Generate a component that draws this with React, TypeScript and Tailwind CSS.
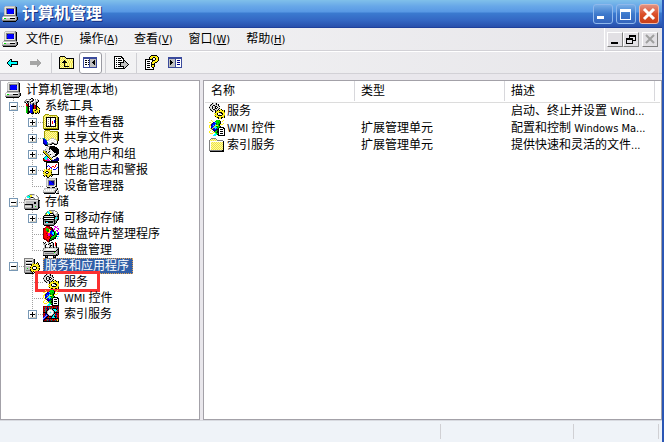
import clsx from "clsx";

const palette: Record<string, string> = {
  k: "#000000",
  w: "#ffffff",
  l: "#e4e4e0",
  g: "#c0c0c0",
  d: "#808080",
  D: "#404040",
  b: "#0000ff",
  n: "#000084",
  y: "#ffef18",
  Y: "#efde4a",
  s: "#ffff9c",
  o: "#9c9a00",
  r: "#ff0000",
  R: "#840000",
  c: "#00ffff",
  t: "#008284",
  G: "#00e000",
  e: "#008200",
  m: "#e000e0",
  N: "#3a4a9c",
  L: "#a5b6e8",
};

const icons: Record<string, string[]> = {
  computer: [
    "...ggggggggggd..",
    "..glllllllllgdk.",
    "..glddddddddgdk.",
    "..gldnbbbbbnldk.",
    "..gldbbbbbbbldk.",
    "..gldbbbbbbbldk.",
    "..gldbbbbbbbldk.",
    "..gldnbbbbbnldk.",
    "..glllllllllldk.",
    "..ddddddddddddk.",
    ".gggggggggggggd.",
    "gwwwwwwwwwwwwgdk",
    "gwGGggggkkkkkgdk",
    "ggggggggggggggdk",
    "ddddddddddddddk.",
    ".kkkkkkkkkkkkk..",
  ],
  tools: [
    ".......kk.......",
    "..dggdkwdk.d.d..",
    ".dgwwgwgDk.g.gk.",
    "dgdkkgdkk..gggk.",
    "dk.kdgk..gggkk..",
    "..kgk.dgdkgdk...",
    "..rRk.bgnkdgk...",
    "..rRk.bbnkrRk...",
    "..GRkkbbnkrRkk..",
    "..GekwbbnkrRkyk.",
    "..GekgbbnkrRkyyk",
    "..GekwbbnyyykoyY",
    "..GekgbbnyokyYyk",
    "..GekkbbnoyYyoyk",
    "..GekkbbnkyoykYk",
    "...kk..kkk.kk.k.",
  ],
  events: [
    "..oooo..........",
    ".oYsYsoooooooo..",
    "oYsYsYsYsYsYsYo.",
    "osYkkkkkkkkkkYok",
    "oYskwwwkwwwwksok",
    "osYkwdwkwwwwkYok",
    "oYskwwwkwwwbksok",
    "osYkwdwkwrwbkYok",
    "oYskwwwkwrwbksok",
    "osYkwdwkwrwwkYok",
    "oYskwwwkwwwwksok",
    "osYkwdwkwwwwkYok",
    "oYskkkkkkkkkksok",
    "osYsYsYsYsYsYsok",
    "oooooooooooooook",
    ".kkkkkkkkkkkkkkk",
  ],
  shared: [
    "..ooooo.........",
    ".oYsYsYoooooooo.",
    ".osYsYsYsYsYsYok",
    ".oYsYsYsYsYsYsok",
    ".osYsYsYsYsYsYok",
    ".oYsYsYsYsYsYsok",
    ".osYsYsYsYsYsYok",
    ".oYsYsYsYsYsYsok",
    "ttsYsYsYgggsYsok",
    "nbtYsYgwwwwggYok",
    "nbbtggwwlwlwwgok",
    "nbbbwwlwwwwlwwk.",
    "nbbbtwwwgdgwwwk.",
    "nnbbtgggdkkdggk.",
    ".nnntddkk..kkk..",
    "..kkk...........",
  ],
  users: [
    "....gddkkkkk....",
    "...glwDkkkkkkk..",
    "...lllkkkkkkkkk.",
    "..dlllklkkkkkkkk",
    "dgglllllwkkkkkkk",
    "oydkwlklwwkkkkkk",
    "kyodlklwwlwkkkkk",
    ".kyodwlwwlllwkkk",
    "..kyodlkllwlkkk.",
    "...kyodwwwllkk..",
    "..tckyowllkkd...",
    ".tccckyolkwwwdn.",
    "kcccmwkyowwwgnnn",
    "Rrccmmwkygwnnnnn",
    "RRrrmmmwknnnnnnk",
    ".kkkkkkkkkkkkkk.",
  ],
  perf: [
    "...kkkkkkkkkkkkk",
    "...kwwwwwwwwwwwk",
    "...kwwwwwwwwwrwk",
    "...kwbwwwwwwrwwk",
    "...kbwbwwrrwrwwk",
    "...kwwwbrwwrwwbk",
    "...kwwrwbwwwwbwk",
    ".y.oyrowywbbbwwk",
    ".yyYyYyyowwwwwwk",
    "kyykkyyYowwwwwwk",
    "yYk..kyykwwwwwwk",
    "oyykkyyYowwwwwwk",
    ".yYyyYyykkkkkkkk",
    "kyokyYokyk......",
    ".k.koyk.k.......",
    "....kk..........",
  ],
  device: [
    "...ggggggggggk..",
    "...gllllllllgk..",
    "...gldddddddlk..",
    "...gldbbnnndlk..",
    "...gldbbbnndlk..",
    "...gldbbbbndlk..",
    "...gldbbbbbdlk..",
    "...glddddddllk..",
    "...dllllllllkk..",
    "....kkkggkkk.g..",
    ".gggggggggggggk.",
    ".glwlwlwlwlwgdk.",
    "gwlwlwlwlwlgdk.g",
    "gllllllllllgk.gd",
    "ddddddddddddk.gdk",
    ".kkkkkkkkkkk.kkk",
  ],
  storage: [
    ".....gddddg.....",
    "...gdcyylllwd...",
    "..gccGyywwwwld..",
    ".gwcccdkkdwwwld.",
    ".gwwwdgwwgdwwld.",
    "ddddddddddddddd.",
    "dlllllllllllllkk",
    "glggggggggggggkd",
    "glggggggggkkggkd",
    "glggggggggkkggkd",
    "dkkkkkkkkgggggkd",
    "dggggggdkgggggkd",
    "dllllllgkggGggkd",
    "dggggggdkgggggkk",
    "ddddddddddddddk.",
    ".kkkkkkkkkkkkk..",
  ],
  removable: [
    "......dddddd....",
    "....dcyygggwdd..",
    "...dcccyydgwwwd.",
    "..dGwcckkkdwwgd.",
    "..dyywkwwwkgggdk",
    ".kkkkkkkkkkkggdk",
    "kgllllllllgkkdkk",
    "kkkkkkkkkkkkdcdk",
    "kwwwwwwwwwwkccdk",
    "kkkkkkkkkkkkgdkk",
    "kddgggggggdkddk.",
    "kdkkkkkkkkdkdk..",
    "kgkcckkkkkgkdk..",
    "kgggggggggdkk...",
    "kddddddddddk....",
    ".kkkkkkkkkk.....",
  ],
  defrag: [
    "...rRRR....mm.m.",
    "..rrrrRRk...mm..",
    "RRrGGrRrRk.m..mm",
    "RrrGGGyRRkmm...m",
    "RrrGeeyybkk..mm.",
    "RrrreeybbbkGG.m.",
    "RrrrryybbcckG..b",
    "RrrRrmmbbcckGGbb",
    "RrrrrmmRbbckGekb",
    "RrrrRmmRrbkGee..",
    "RrrrrrRrkGGGekcc",
    "RrrrRrrkGGeek...",
    "RRrrrrrkeeekk.c.",
    ".RRRrrkGekk.....",
    "...RRrkkk.......",
    "....RRk.........",
  ],
  disk: [
    "k.k..dg.kk..r...",
    "gkg..gkkwgk.rk..",
    "gggk.kggwgk.rk..",
    ".gk...gkkgk.rk..",
    ".gk...gk.gk.gk..",
    ".gkddgkddgkdgkdd",
    "dggllllllllllggk",
    "dllwwwwwwwwlllkk",
    "gllllllllllllkdk",
    "dkkkkkkkkkkkkgdk",
    "dggggggggggGggdk",
    "dgdddddddddgggdk",
    "dggggggggggggkdk",
    "kkkkkkkkkkkkkkk.",
    "..kdk.....kdk...",
    "..kkk.....kkk...",
  ],
  serverGear: [
    "ddddddddd.......",
    "dlllllllldk.....",
    "dggggggggdk.....",
    "dgkkkkkkgdk.....",
    "dgwwwwwwgdk..k..",
    "dggggggggyk.kyk.",
    "dgkkkkkkyoyyyYk.",
    "dgwwwwwkyYyyyyyk",
    "dgggggyyykkkyYok",
    "dgggggkyk...kyyy",
    "dggGggyyk...kYok",
    "dgggggkyykkkyyyk",
    "dgddddkyyyyyYyk.",
    "dgggggdkykyykyk.",
    "ddddddddk.kyk.k.",
    ".kkkkkkkkk.k....",
  ],
  gears: [
    "...kg.gk........",
    ".gkgllgkgk......",
    ".kglkklglk......",
    "gglk.gkklgk.....",
    "kllkggk.kll.....",
    "gglk.gkklgk.....",
    ".kglkklglk.yk...",
    ".gkglgkgkykyykyk",
    "...kg.koyyyYyyyk",
    "......kyYykkkyyo",
    ".....yyyk..gkkyy",
    "......oyk.g..kyy",
    ".....yyyYkkkkyYo",
    "......kyyyYyyyyk",
    ".......ykkyykkyk",
    ".........kyyk...",
  ],
  wmi: [
    "..y....GGGe...y.",
    "...y..eGGGGk.y..",
    "yy..nbcGGeGk....",
    "..ynbbbeGGek..y.",
    ".ynbbbceGekyyy..",
    "yynbcbyyyGk.....",
    "y.bbbyceeGGk....",
    "y.nbyccceGkkkkk.",
    ".ynybbcbGkwwwwkk",
    "..ynnbbnkkwkkkwk",
    ".y..nnneekwwwwwk",
    "y..y.nGGkkwkkkwk",
    "y...yyGekkwwwwwk",
    ".yyy..cGGkwkkkwk",
    ".....ccckkwwwwwk",
    "....ccc..kkkkkkk",
  ],
  index: [
    "RRRRRRRRRRRRRRRR",
    "RrtrnrtrerRrtrnR",
    "RRtRnRtRtRkkkRnR",
    "RrtrnkgggkcccktR",
    "RRtRkgwwwgkcccRR",
    "RrtkgwwlwwgkcrtR",
    "kkkkgwlclwgkkkkk",
    "RrnkgwwlwwgkrnrR",
    "RRnbkgwwwgkcRnRR",
    "RrbLbkgggkctrtrR",
    "RbLbkRkkktckknrR",
    "bLbkRrtrncccktRR",
    "Lbkkkkkkkkkkkkkk",
    "bkRrtrnrerRrRryk",
    "kRRRtRnRtRRRtRyk",
    "kkkkkkkkkkkkkkkk",
  ],
  folder: [
    "................",
    "..ddddd.........",
    ".dsYsYsd........",
    "dsYsYsYsdddddd..",
    "dwwwwwwwwwwwwwk.",
    "dwsYsYsYsYsYsYk.",
    "dwYsYsYsYsYsYsk.",
    "dwsYsYsYsYsYsYk.",
    "dwYsYsYsYsYsYsk.",
    "dwsYsYsYsYsYsYk.",
    "dwYsYsYsYsYsYsk.",
    "dwsYsYsYsYsYsYk.",
    "dwYsYsYsYsYsYsk.",
    "dddddddddddddkk.",
    ".kkkkkkkkkkkkkk.",
    "................",
  ],
  back: [
    "................",
    "................",
    "................",
    "................",
    ".....kk.........",
    "....kck.........",
    "...kcckkkkkkk...",
    "..kccccccccck...",
    "..kccccccccck...",
    "...kcckkkkkkk...",
    "....kck.........",
    ".....kk.........",
    "................",
    "................",
    "................",
    "................",
  ],
  forward: [
    "................",
    "................",
    "................",
    "................",
    ".........z......",
    ".........zz.....",
    "..zzzzzzzzzz....",
    "..zzzzzzzzzzz...",
    "..zzzzzzzzzzz...",
    "..zzzzzzzzzz....",
    ".........zz.....",
    ".........z......",
    "................",
    "................",
    "................",
    "................",
  ],
  up: [
    "................",
    ".kkkkk..........",
    "kYsYsYk.........",
    "kYsYsYskkkkkkkk.",
    "ksYsYsYsYsYsYsk.",
    "kYsYskYsYsYsYsk.",
    "ksYskkkYsYsYsYk.",
    "kYskkkkksYsYsYk.",
    "ksYsYkYsYsYsYsk.",
    "kYsYskYsYsYsYsk.",
    "ksYsYkYsYsYsYsk.",
    "kYsYskkkkkYsYsk.",
    "ksYsYsYsYsYsYsk.",
    "kkkkkkkkkkkkkkk.",
    "................",
    "................",
  ],
  paneLeft: [
    "................",
    "................",
    ".NNNNNNNNNNNNNN.",
    ".NNNNNNNNNNNNNN.",
    ".NwwwwwNggggggN.",
    ".NwkkwkNggggkgN.",
    ".NwwwwwNgggkkgN.",
    ".NwkkwkNggkkkgN.",
    ".NwwwwwNgggkkgN.",
    ".NwkkwkNggggkgN.",
    ".NwwwwwNggggggN.",
    ".NwwwwwNggggggN.",
    ".NNNNNNNNNNNNNN.",
    "................",
    "................",
    "................",
  ],
  paneRight: [
    "................",
    "................",
    ".NNNNNNNNNNNNNN.",
    ".NNNNNNNNNNNNNN.",
    ".NggggggNwwwwwN.",
    ".NgkggggNwnnnwN.",
    ".NgkkgggNwwwwwN.",
    ".NgkkkggNwnnnwN.",
    ".NgkkgggNwwwwwN.",
    ".NgkggggNwnnnwN.",
    ".NggggggNwwwwwN.",
    ".NggggggNwwwwwN.",
    ".NNNNNNNNNNNNNN.",
    "................",
    "................",
    "................",
  ],
  exportList: [
    "................",
    ".kkkkkkkk.......",
    ".kwwwwwwkk......",
    ".kwkwkkkwkk.....",
    ".kwwwwwwwwk.....",
    ".kwkwkkkkwkk....",
    ".kwwwwwwwwkgk...",
    ".kwkwkkkkkkggk..",
    ".kwwwwwkggggggk.",
    ".kwkwkkkgggggggk",
    ".kwwwwwkggggggk.",
    ".kwkwkkkkkkggk..",
    ".kwwwwwwwwkgk...",
    ".kkkkkkkkkkk....",
    "................",
    "................",
  ],
  help: [
    ".......kkkkkk...",
    "......kyyyyyyk..",
    ".....kyyykkyyyk.",
    ".....kyyk..kyyk.",
    ".kkkkkkkk..kyyk.",
    ".kwwwwwwkkkyyyk.",
    ".kwkkkwwkyyyyk..",
    ".kwwwwwkyyykk...",
    ".kwkkkwkyyk.....",
    ".kwwwwwkkkk.....",
    ".kwkkkwkyyk.....",
    ".kwwwwwkyyk.....",
    ".kwkkkwwkk......",
    ".kwwwwwwwk......",
    ".kkkkkkkkk......",
    "................",
  ],
};

// Draws a 16x16 bitmap, merging equal neighbours of a line into one rect.
const Icon = ({ name, className }: { name: string; className?: string }) => (
  <svg
    viewBox="0 0 16 16"
    shapeRendering="crispEdges"
    aria-hidden="true"
    className={clsx("h-4 w-4 shrink-0", className)}
  >
    {icons[name].map((line, y) =>
      Array.from(line.matchAll(/([^.])\1*/g)).map((run) => (
        <rect
          key={`${y}-${run.index}`}
          x={run.index}
          y={y}
          width={run[0].length}
          height={1}
          fill={palette[run[1]] ?? "#a5a5a5"}
        />
      )),
    )}
  </svg>
);

// Latin runs are set one size smaller than the Chinese text around them.
const Mixed = ({ text }: { text: string }) => (
  <span>
    {text.split(/([\x20-\x7e]+)/).map((part, index) =>
      index % 2 ? (
        <span key={index} className="text-[11px]">
          {part}
        </span>
      ) : (
        part
      ),
    )}
  </span>
);

type Node = {
  label: string;
  icon: string;
  cells: string[];
  selected?: boolean;
  marked?: boolean;
};

// Guide cells: "line" passes by, "tee" and "end" join the item,
// "plus" and "minus" are joints with an expander.
const nodes: Node[] = [
  { label: "计算机管理(本地)", icon: "computer", cells: [] },
  { label: "系统工具", icon: "tools", cells: ["minus"] },
  { label: "事件查看器", icon: "events", cells: ["line", "plus"] },
  { label: "共享文件夹", icon: "shared", cells: ["line", "plus"] },
  { label: "本地用户和组", icon: "users", cells: ["line", "plus"] },
  { label: "性能日志和警报", icon: "perf", cells: ["line", "plus"] },
  { label: "设备管理器", icon: "device", cells: ["line", "end"] },
  { label: "存储", icon: "storage", cells: ["minus"] },
  { label: "可移动存储", icon: "removable", cells: ["line", "plus"] },
  { label: "磁盘碎片整理程序", icon: "defrag", cells: ["line", "tee"] },
  { label: "磁盘管理", icon: "disk", cells: ["line", "end"] },
  { label: "服务和应用程序", icon: "serverGear", cells: ["minus-end"], selected: true },
  { label: "服务", icon: "gears", cells: ["blank", "tee"], marked: true },
  { label: "WMI 控件", icon: "wmi", cells: ["blank", "tee"] },
  { label: "索引服务", icon: "index", cells: ["blank", "plus-end"] },
];

const Guide = ({ kind, label }: { kind: string; label: string }) => {
  const isExpander = kind.startsWith("plus") || kind.startsWith("minus");
  const drawing = (
    <svg viewBox="0 0 19 16" shapeRendering="crispEdges" aria-hidden="true" className="h-4 w-[19px]">
      {kind !== "blank" && (
        <path
          d={kind.endsWith("end") ? "M8.5 0V9" : "M8.5 0V16"}
          stroke="#a0a0a0"
          strokeDasharray="1 1"
        />
      )}
      {kind !== "blank" && kind !== "line" && (
        <path d="M8 8.5H19" stroke="#a0a0a0" strokeDasharray="1 1" />
      )}
      {isExpander && (
        <>
          <rect x="4" y="4" width="9" height="9" fill="#7898b5" />
          <rect x="5" y="5" width="7" height="7" fill="#ffffff" />
          <path d="M6 11.5H12M11.5 7V12" stroke="#d0ccc0" />
          <path d="M6 8.5H11" stroke="#000000" />
          {kind.startsWith("plus") && <path d="M8.5 6V11" stroke="#000000" />}
        </>
      )}
    </svg>
  );

  return isExpander ? (
    <button type="button" aria-label={label} className="h-4 w-[19px] shrink-0">
      {drawing}
    </button>
  ) : (
    <span className="h-4 w-[19px] shrink-0">{drawing}</span>
  );
};

const TreeItem = ({ node }: { node: Node }) => (
  <li className="relative flex h-4 items-center">
    {node.cells.map((kind, index) => (
      <Guide key={index} kind={kind} label={node.label} />
    ))}
    <Icon name={node.icon} />
    <button
      type="button"
      className={clsx(
        "ml-[3px] h-4 pr-1 pl-0.5 leading-4 whitespace-nowrap",
        node.selected &&
          "bg-[#315fa8] text-white outline-1 -outline-offset-1 outline-dotted outline-[#e0a050]",
      )}
    >
      <Mixed text={node.label} />
    </button>
    {node.marked && (
      <span className="pointer-events-none absolute -top-[3px] left-[30px] h-[21px] w-[65px] border-3 border-[#fb3030]"></span>
    )}
  </li>
);

const menus = [
  { label: "文件", hotkey: "F" },
  { label: "操作", hotkey: "A" },
  { label: "查看", hotkey: "V" },
  { label: "窗口", hotkey: "W" },
  { label: "帮助", hotkey: "H" },
];

const services = [
  { name: "服务", icon: "gears", type: "", description: "启动、终止并设置 Wind..." },
  { name: "WMI 控件", icon: "wmi", type: "扩展管理单元", description: "配置和控制 Windows Ma..." },
  { name: "索引服务", icon: "folder", type: "扩展管理单元", description: "提供快速和灵活的文件..." },
];

const TitleButton = ({ label, close, d }: { label: string; close?: boolean; d: string }) => (
  <button
    type="button"
    aria-label={label}
    className={clsx(
      "h-5 w-5 rounded-[3px] border",
      close
        ? "border-[#f0b8a8] bg-linear-to-b from-[#e09080] via-[#dc4f28] to-[#c84018]"
        : "border-[#8fb8ec] bg-linear-to-b from-[#78aee6] via-[#3d79cc] to-[#3565bc]",
    )}
  >
    <svg viewBox="0 0 18 18" className="h-[18px] w-[18px]" fill="none" stroke="#ffffff" aria-hidden="true">
      <path d={d} strokeWidth={close ? 3 : 1} shapeRendering={close ? undefined : "crispEdges"} />
    </svg>
  </button>
);

const ChildButton = ({ label, d, disabled }: { label: string; d: string; disabled?: boolean }) => (
  <button
    type="button"
    aria-label={label}
    disabled={disabled}
    className="h-[15px] w-4 border border-t-white border-r-[#808080] border-b-[#808080] border-l-white bg-[#e2e0e4]"
  >
    <svg
      viewBox="0 0 14 13"
      className="h-[13px] w-3.5"
      fill="none"
      stroke={disabled ? "#a0a0a0" : "#000000"}
      shapeRendering={disabled ? undefined : "crispEdges"}
      aria-hidden="true"
    >
      <path d={d} strokeWidth={disabled ? 2 : 1} />
    </svg>
  </button>
);

const ToolButton = ({ icon, label, pressed }: { icon: string; label: string; pressed?: boolean }) => (
  <button
    type="button"
    aria-label={label}
    className={clsx(
      "flex h-[22px] w-[23px] items-center pl-[3px]",
      pressed && "rounded-[3px] bg-white outline-1 -outline-offset-1 outline-[#9a9aa2]",
    )}
  >
    <Icon name={icon} />
  </button>
);

const Separator = () => <span className="mr-1 ml-[3px] h-5 w-px bg-[#cfcfd4]"></span>;

export default function App() {
  return (
    <div className="flex min-h-screen flex-col border-r-2 border-[#2a56b4] bg-[#e9e7ec] font-['DejaVu_Sans_Condensed','Noto_Sans_CJK_SC',sans-serif] text-xs text-black">
      <header className="flex h-7 items-center border-b border-[#1f419c] bg-[linear-gradient(#80c0ea_0px,#68a8e8_6px,#5898e4_12px,#3b7bd0_13px,#3468c4_20px,#2850ac_27px)] pr-[3px] pl-0.5">
        <Icon name="computer" />
        <h1 className="ml-1 grow text-base leading-5 font-bold text-white [text-shadow:1px_1px_#183080]">
          计算机管理
        </h1>
        <div className="flex gap-[3px]">
          <TitleButton label="最小化" d="M3 11.5H10M3 12.5H10M3 13.5H10" />
          <TitleButton
            label="最大化"
            d="M3 4.5H14M3 5.5H14M3 6.5H14M3.5 4V15M13.5 4V15M3 14.5H14"
          />
          <TitleButton label="关闭" close d="M4 4L14 14M14 4L4 14" />
        </div>
      </header>

      <nav className="flex h-6 items-stretch border-b border-white bg-linear-to-r from-[#f5f5f6] to-[#e6e5e9]">
        <div className="flex grow items-center border-b border-[#d2d1d6] pl-0.5">
          <Icon name="computer" />
          <div className="flex gap-4 pl-2">
            {menus.map((menu) => (
              <button key={menu.hotkey} type="button" className="leading-5 whitespace-nowrap">
                {menu.label}
                <span className="text-[11px]">
                  (<u>{menu.hotkey}</u>)
                </span>
              </button>
            ))}
          </div>
        </div>
        <div className="flex items-center border-b border-l border-b-[#d2d1d6] border-l-white pr-1 pl-0.5">
          <ChildButton label="最小化子窗口" d="M3 9.5H10M3 10.5H10" />
          <ChildButton
            label="还原子窗口"
            d="M5 2.5H12M5 3.5H12M5.5 2V6M11.5 2V8M9 7.5H12M2 5.5H9M2 6.5H9M2.5 5V11M8.5 5V11M2 10.5H9"
          />
          <span className="w-[3px]"></span>
          <ChildButton label="关闭子窗口" disabled d="M3 2L11 10M11 2L3 10" />
        </div>
      </nav>

      <div className="flex h-[22px] items-center border-b border-[#d2d1d6] bg-linear-to-r from-[#f5f5f6] to-[#e6e5e9] pl-0.5">
        <ToolButton icon="back" label="后退" />
        <ToolButton icon="forward" label="前进" />
        <Separator />
        <ToolButton icon="up" label="上移一级" />
        <ToolButton icon="paneLeft" label="显示/隐藏控制台树" pressed />
        <Separator />
        <ToolButton icon="exportList" label="导出列表" />
        <Separator />
        <ToolButton icon="help" label="帮助" />
        <ToolButton icon="paneRight" label="显示/隐藏操作窗格" />
      </div>

      <main className="flex grow gap-[3px] pt-1.5">
        <aside className="w-[200px] shrink-0 border border-[#a3a1a8] bg-white pt-px pl-1">
          <ul>
            {nodes.map((node) => (
              <TreeItem key={node.label} node={node} />
            ))}
          </ul>
        </aside>
        <section className="min-w-0 grow border border-[#a3a1a8] bg-white px-px">
          <table className="w-full table-fixed border-collapse text-left">
            <thead>
              <tr className="h-[21px] border-b border-[#dcdcdc]">
                {["名称", "类型", "描述"].map((title) => (
                  <th key={title} className="w-[150px] p-0 align-middle font-normal">
                    <div className="flex h-5 items-center border-r border-[#d8d8dc] pl-1.5 leading-4">
                      {title}
                    </div>
                  </th>
                ))}
                <th className="p-0"></th>
              </tr>
            </thead>
            <tbody>
              {services.map((service) => (
                <tr key={service.name} className="h-[17px]">
                  <td className="p-0">
                    <div className="flex h-[17px] items-center gap-0.5 pl-1 leading-4 whitespace-nowrap">
                      <Icon name={service.icon} />
                      <Mixed text={service.name} />
                    </div>
                  </td>
                  <td className="p-0 pl-1.5 leading-4 whitespace-nowrap">{service.type}</td>
                  <td className="p-0 pl-1.5 leading-4 whitespace-nowrap">
                    <Mixed text={service.description} />
                  </td>
                  <td className="p-0"></td>
                </tr>
              ))}
            </tbody>
          </table>
        </section>
      </main>

      <footer className="flex h-[22px] justify-end border-t border-[#d8dae0] bg-[#eff3f8] py-[3px] pr-[3px]">
        <span className="w-[133px] border-l border-[#d0d0d4]"></span>
        <span className="w-[86px] border-x border-[#d0d0d4]"></span>
      </footer>
    </div>
  );
}
